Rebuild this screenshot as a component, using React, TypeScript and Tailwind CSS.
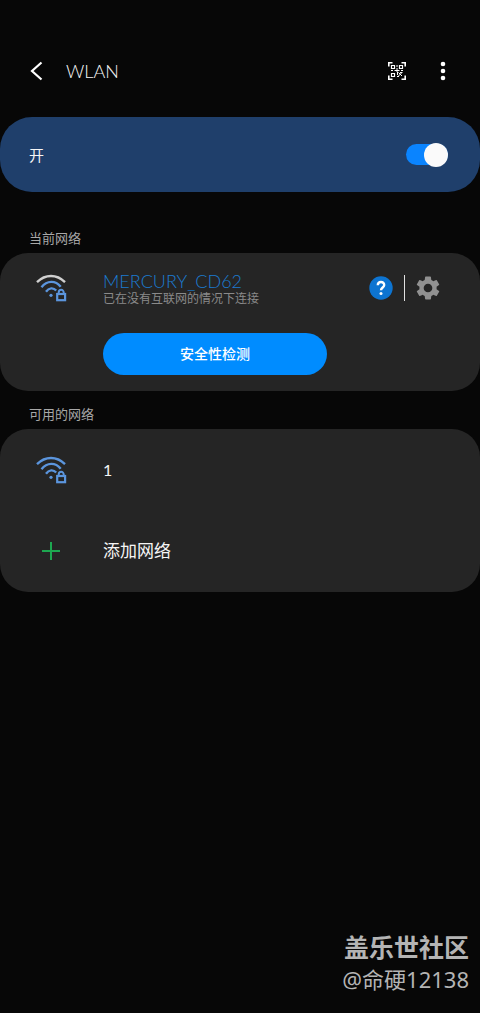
import React, { useState } from 'react';

function WifiLockIcon({ outer = '#5b95dd' }: { outer?: string }) {
  return (
    <svg viewBox="0 0 32 28" className="w-8 h-7 shrink-0" fill="none" stroke="#5b95dd" strokeWidth="2.4" aria-hidden="true">
      <path d="M1 8.2C9.5 0 20.5 0 29 8.2" stroke={outer} />
      <path d="M5.5 13.2C11 6.2 19.5 6.2 24.7 12.8" />
      <path d="M10 17.8C13 13.6 17.3 13.4 20.2 16.5" />
      <circle cx="15" cy="21.3" r="1.6" fill="#5b95dd" stroke="none" />
      <rect x="21.2" y="20" width="7.9" height="6.2" strokeWidth="2.2" />
      <path d="M22.7 20V18.5a2.5 2.7 0 0 1 5 0V20" strokeWidth="2" />
    </svg>
  );
}

function QrScanIcon() {
  return (
    <svg viewBox="0 0 18 18" className="w-[18px] h-[18px]" fill="none" stroke="#fff" aria-hidden="true">
      <path d="M.8 4.5V.8H4.5M13.5 .8H17.2V4.5M17.2 13.5V17.2H13.5M4.5 17.2H.8V13.5" strokeWidth="1.6" />
      <path d="M3.5 3.5h3v3h-3zM11.5 3.5h3v3h-3zM3.5 11.5h3v3h-3z" strokeWidth="1.2" />
      <path d="M9 3v2M9 6v4M3 8.5h2M6.5 8.5h5M13 8.5h2M9.5 10v3M10.5 10.5l3.5 3.5M12 10.5h2.5M10.5 14l3-3M9 14.5h2" />
    </svg>
  );
}

function SectionTitle({ children }: { children: React.ReactNode }) {
  return <h2 className="px-[29px] text-[13px] leading-5 text-[#a8a8a8]">{children}</h2>;
}

export default function App() {
  const [enabled, setEnabled] = useState(true);

  return (
    <div
      lang="zh-CN"
      className="flex min-h-screen flex-col bg-[#070707] font-['Lato','Noto_Sans_CJK_SC',sans-serif] text-[#f5f5f5]"
    >
      {/* Title bar */}
      <header className="flex items-center px-7 pt-[51px] pb-[26px]">
        <button type="button" aria-label="返回" className="flex h-10 w-[38px] items-center">
          <svg viewBox="0 0 16 20" className="h-5 w-4" fill="none" stroke="#fff" strokeWidth="2.2" aria-hidden="true">
            <path d="M13.5 1.5L4 10l9.5 8.5" />
          </svg>
        </button>
        <h1 className="text-lg leading-6 font-light">WLAN</h1>
        <div className="ml-auto flex items-center gap-7">
          <button type="button" aria-label="扫描二维码" className="flex h-10 items-center">
            <QrScanIcon />
          </button>
          <button type="button" aria-label="更多选项" className="flex h-10 w-[18px] items-center justify-center">
            <svg viewBox="0 0 6 20" className="h-5 w-1.5" fill="#fff" aria-hidden="true">
              <circle cx="3" cy="3" r="2.3" />
              <circle cx="3" cy="10" r="2.3" />
              <circle cx="3" cy="17" r="2.3" />
            </svg>
          </button>
        </div>
      </header>

      <main>
        {/* WLAN switch */}
        <label className="flex h-[75px] cursor-pointer items-center justify-between rounded-[32px] bg-[#1f3f6b] pr-8 pl-[29px]">
          <span className="text-[15px] leading-6">开</span>
          <input
            type="checkbox"
            role="switch"
            checked={enabled}
            onChange={(e) => setEnabled(e.target.checked)}
            className="flex h-[21px] w-[42px] appearance-none items-center rounded-full bg-[#5a6b82] before:size-6 before:shrink-0 before:rounded-full before:bg-[#fafafa] before:content-[''] checked:justify-end checked:bg-[#0a84ff]"
          />
        </label>

        {/* Current network */}
        <section className="pt-9">
          <SectionTitle>当前网络</SectionTitle>
          <div className="mt-[5px] rounded-[28px] bg-[#252525] py-4 pr-10 pl-9">
            <div className="flex h-[38px] items-center">
              <WifiLockIcon outer="#d0d0d0" />
              <div className="ml-[35px] flex-1 pt-0.5">
                <p className="text-lg leading-5 font-light text-[#1c7bd0]">MERCURY_CD62</p>
                <p className="text-xs leading-4 text-[#8a8a8a]">已在没有互联网的情况下连接</p>
              </div>
              <button type="button" aria-label="帮助">
                <svg viewBox="0 0 24 24" className="size-6" aria-hidden="true">
                  <circle cx="12" cy="12" r="11.7" fill="#0d74d1" />
                  <path d="M8.8 9.3C8.8 4.9 15.2 5 15.2 9.1C15.2 11.5 12 11.5 12 14.3" fill="none" stroke="#fff" strokeWidth="2.4" />
                  <circle cx="12" cy="17.5" r="1.5" fill="#fff" />
                </svg>
              </button>
              <span className="mx-[11px] h-[26px] w-px bg-[#e0e0e0]" />
              <button type="button" aria-label="网络设置">
                <svg viewBox="2 2 20 20" className="size-6" fill="#919191" aria-hidden="true">
                  <path d="M19.14 12.94c.04-.3.06-.61.06-.94s-.02-.64-.07-.94l2.03-1.58a.49.49 0 0 0 .12-.61l-1.92-3.32a.49.49 0 0 0-.59-.22l-2.39.96a7 7 0 0 0-1.62-.94l-.36-2.54a.48.48 0 0 0-.48-.41h-3.84c-.24 0-.43.17-.47.41l-.36 2.54a7 7 0 0 0-1.62.94l-2.39-.96a.48.48 0 0 0-.59.22L2.74 8.87a.48.48 0 0 0 .12.61l2.03 1.58a7 7 0 0 0 0 1.88l-2.03 1.58a.49.49 0 0 0-.12.61l1.92 3.32c.12.22.37.29.59.22l2.39-.96c.5.38 1.03.7 1.62.94l.36 2.54c.05.24.24.41.48.41h3.84c.24 0 .44-.17.47-.41l.36-2.54a7 7 0 0 0 1.62-.94l2.39.96c.22.08.47 0 .59-.22l1.92-3.32a.48.48 0 0 0-.12-.61zM12 15.6a3.6 3.6 0 1 1 0-7.2 3.6 3.6 0 0 1 0 7.2z" />
                </svg>
              </button>
            </div>
            <div className="mt-[26px] pr-[113px] pl-[67px]">
              <button type="button" className="h-[42px] w-full rounded-full bg-[#008cff] text-sm font-medium text-white">
                安全性检测
              </button>
            </div>
          </div>
        </section>

        {/* Available networks */}
        <section className="pt-[13px]">
          <SectionTitle>可用的网络</SectionTitle>
          <ul className="mt-[5px] rounded-[28px] bg-[#252525] pb-px">
            <li>
              <button type="button" className="flex h-[81px] w-full items-center pl-9 text-left">
                <WifiLockIcon />
                <span className="ml-[35px] text-base">1</span>
              </button>
            </li>
            <li>
              <button type="button" className="flex h-[81px] w-full items-center pl-9 text-left">
                <svg viewBox="0 0 32 28" className="h-7 w-8 shrink-0" stroke="#1da750" strokeWidth="2" aria-hidden="true">
                  <path d="M15 5v18M6 14h18" />
                </svg>
                <span className="ml-[35px] text-[17px]">添加网络</span>
              </button>
            </li>
          </ul>
        </section>
      </main>

      {/* Community watermark */}
      <footer className="mt-auto pr-[11px] pb-[18px] text-right font-['Noto_Sans','Noto_Sans_CJK_SC',sans-serif] text-[#b4b4b4]">
        <p className="text-[25px] leading-8 font-bold">盖乐世社区</p>
        <p className="text-[22px] leading-8">@命硬12138</p>
      </footer>
    </div>
  );
}
